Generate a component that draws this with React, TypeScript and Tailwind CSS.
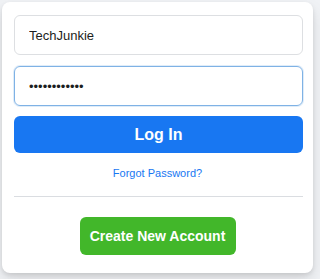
export default function App() {
  return (
    <div className="w-[320px] h-[279px] bg-[#f0f2f5] pt-[2px] pl-[2px] font-['Liberation_Sans',Arial,sans-serif]">
      <div className="w-[311px] h-[271px] rounded-lg bg-white px-3 pt-[13px] shadow-[0_2px_4px_rgba(0,0,0,0.1),0_8px_16px_rgba(0,0,0,0.1)]">
        <div className="flex flex-col">
          <input
            type="text"
            defaultValue="TechJunkie"
            className="h-[40px] w-[289px] rounded-md border border-[#dddfe2] px-[14px] text-[13px] text-[#1c1e21] outline-none"
          />
          <input
            type="password"
            defaultValue="techjunkie12"
            className="mt-[11px] h-[40px] w-[289px] rounded-md border border-[#7fb2e5] px-[14px] text-[13px] text-[#1c1e21] outline-none shadow-[0_0_0_1px_rgba(127,178,229,0.25)]"
          />
          <button className="mt-[10px] h-[37px] w-[289px] rounded-md bg-[#1877f2] text-[16px] font-bold text-white">
            Log In
          </button>
          <a className="mt-[13px] block text-center text-[11px] leading-[14px] text-[#1877f2]">
            Forgot Password?
          </a>
          <div className="mt-[16px] h-px w-[289px] bg-[#dadde1]" />
          <div className="mt-[20px] flex justify-center">
            <button className="h-[38px] w-[156px] rounded-md bg-[#42b72a] text-[14px] font-bold text-white">
              Create New Account
            </button>
          </div>
        </div>
      </div>
    </div>
  );
}
